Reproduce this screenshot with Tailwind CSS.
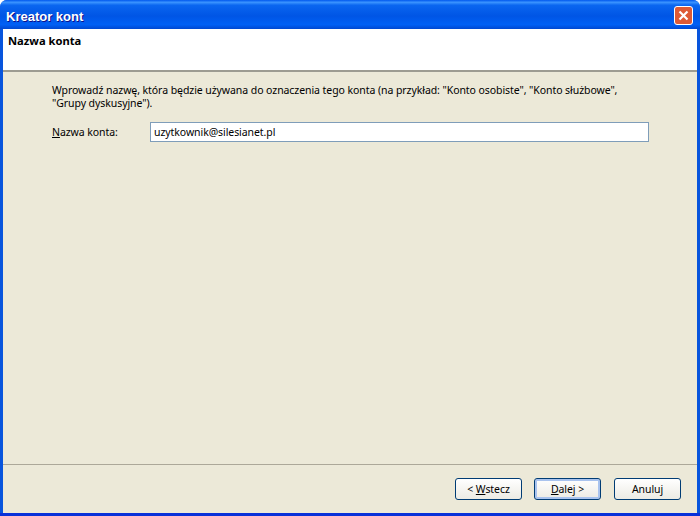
<!DOCTYPE html>
<html><head><script src="https://cdn.jsdelivr.net/npm/@tailwindcss/browser@4"></script></head>
<body class="m-0 w-[700px] h-[516px] overflow-hidden bg-white font-['Noto_Sans','Liberation_Sans',sans-serif]">
<div class="flex flex-col w-[700px] h-[516px] bg-[#0855dd] rounded-t-[7px] overflow-hidden">
<div class="h-[29px] shrink-0 flex items-center justify-between pl-[6px] pr-[6px] pt-[4px] bg-[linear-gradient(to_bottom,#0058ee_0%,#3a93ff_8%,#0a66f0_18%,#0055e5_55%,#0060f5_85%,#0048d0_100%)]">
<span class="font-['Liberation_Sans'] font-bold text-[13px] text-white [text-shadow:1px_1px_0_#0f1089]">Kreator kont</span>
<div class="w-[19px] h-[19px] -mt-[3px] mr-[1px] rounded-[3px] border border-white bg-[#de5a35] flex items-center justify-center">
<svg width="13" height="13" viewBox="0 0 13 13"><path d="M2.5 2.5L10.5 10.5M10.5 2.5L2.5 10.5" stroke="#fff" stroke-width="2.2"/></svg>
</div></div>
<div class="flex-1 flex flex-col mx-[3px] bg-[#ece9d8] text-[10.5px] leading-[13px] tracking-[-0.07px] text-black">
<div class="h-[43px] shrink-0 bg-white border-b-2 border-b-[#9d9c92] pl-[5px] pt-[5px] font-bold text-[11.2px] leading-[14px] tracking-normal">Nazwa konta</div>
<div class="flex-1 pl-[49px] pt-[12px]">
<p class="w-[590px]">Wprowadź nazwę, która będzie używana do oznaczenia tego konta (na przykład: "Konto osobiste", "Konto służbowe", "Grupy dyskusyjne").</p>
<div class="flex items-center mt-[12px]"><span class="w-[98px]"><u>N</u>azwa konta:</span>
<div class="w-[499px] h-[20px] bg-white border border-[#7f9db9] pl-[3px] leading-[18px]">uzytkownik@silesianet.pl</div></div>
</div>
<div class="h-[49px] shrink-0 border-t border-[#aca899] flex items-start justify-end pt-[13px] pr-[16px]">
<button class="w-[67px] h-[22px] rounded-[3px] border border-[#003c74] bg-gradient-to-b from-white to-[#ecebe4]">&lt; <u>W</u>stecz</button>
<button class="ml-[12px] w-[67px] h-[22px] rounded-[3px] border border-[#003c74] bg-gradient-to-b from-white to-[#ecebe4] shadow-[inset_0_0_0_2px_#a9c3ee]"><u>D</u>alej &gt;</button>
<button class="ml-[13px] w-[67px] h-[22px] rounded-[3px] border border-[#003c74] bg-gradient-to-b from-white to-[#ecebe4]">Anuluj</button>
</div></div>
<div class="h-[3px] shrink-0 bg-[#0831d9]"></div>
</div>
</body></html>
